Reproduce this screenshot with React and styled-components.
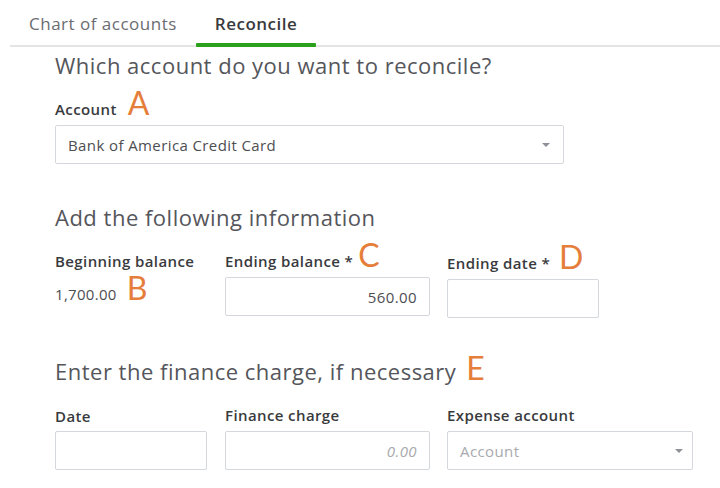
import React from 'react';
import styled, { createGlobalStyle } from 'styled-components';

const GlobalStyle = createGlobalStyle`
  html, body {
    margin: 0;
    padding: 0;
    background: #fff;
  }
  body {
    font-family: 'Open Sans', Lato, sans-serif;
    color: #393a3d;
  }
`;

const Page = styled.div`
  width: 720px;
  height: 488px;
  overflow: hidden;
  background: #fff;
`;

const TabBar = styled.div`
  display: flex;
  margin-left: 10px;
  height: 47px;
  border-bottom: 2px solid #e4e4e4;
  box-sizing: border-box;
`;

const Tab = styled.div`
  position: relative;
  padding: 14px 19px 0;
  font-size: 17px;
  line-height: 20px;
  letter-spacing: 0.5px;
  font-weight: ${(p) => (p.active ? 600 : 400)};
  color: ${(p) => (p.active ? '#393a3d' : '#6b6c72')};
  &::after {
    content: '';
    display: ${(p) => (p.active ? 'block' : 'none')};
    position: absolute;
    left: 0;
    right: 0;
    bottom: -2px;
    height: 4px;
    background: #2ca01c;
    border-radius: 1px;
  }
`;

const Content = styled.div`
  padding: 3px 0 0 55px;
`;

const Heading = styled.h2`
  margin: ${(p) => p.top || 0}px 0 0;
  font-size: 22px;
  line-height: 30px;
  letter-spacing: 0.5px;
  font-weight: 400;
  color: #55565b;
`;

const Label = styled.div`
  font-size: 15px;
  line-height: 20px;
  letter-spacing: 0.4px;
  font-weight: 600;
  color: #393a3d;
  white-space: nowrap;
  margin-top: ${(p) => p.shift || 0}px;
`;

const Marker = styled.span`
  font-family: Lato, sans-serif;
  font-size: 32px;
  line-height: 0;
  font-weight: 400;
  letter-spacing: 0;
  color: #e67e3b;
  margin-left: ${(p) => (p.gap === undefined ? 9 : p.gap)}px;
`;

const Row = styled.div`
  display: flex;
  margin-top: ${(p) => p.top || 0}px;
`;

const Col = styled.div`
  width: ${(p) => p.w}px;
  flex: none;
`;

const Box = styled.div`
  box-sizing: border-box;
  width: ${(p) => p.w}px;
  height: 39px;
  border: 1px solid #d4d7dc;
  border-radius: 2px;
  background: #fff;
  display: flex;
  align-items: center;
  justify-content: ${(p) => (p.right ? 'flex-end' : 'space-between')};
  padding: 0 12px;
  font-size: 15px;
  letter-spacing: 0.4px;
  color: ${(p) => (p.placeholder ? '#a9aaae' : '#4d4e52')};
  font-style: ${(p) => (p.italic ? 'italic' : 'normal')};
  margin-top: 6px;
`;

const Caret = styled.span`
  width: 0;
  height: 0;
  border-left: 4px solid transparent;
  border-right: 4px solid transparent;
  border-top: 4px solid #8d9096;
  margin-right: ${(p) => p.right || 0}px;
`;

const Value = styled.div`
  margin-top: 13px;
  font-size: 15px;
  line-height: 20px;
  letter-spacing: 0.3px;
  color: #4d4e52;
`;

export default function App() {
  return (
    <Page>
      <GlobalStyle />
      <TabBar>
        <Tab>Chart of accounts</Tab>
        <Tab active>Reconcile</Tab>
      </TabBar>
      <Content>
        <Heading>Which account do you want to reconcile?</Heading>
        <Row top={19}>
          <Col w={520}>
            <Label>
              Account<Marker gap={11}>A</Marker>
            </Label>
            <Box w={509}>
              Bank of America Credit Card
              <Caret right={1} />
            </Box>
          </Col>
        </Row>

        <Heading top={38}>Add the following information</Heading>
        <Row top={19}>
          <Col w={170}>
            <Label>Beginning balance</Label>
            <Value>
              1,700.00<Marker gap={10}>B</Marker>
            </Value>
          </Col>
          <Col w={222}>
            <Label>
              Ending balance *<Marker gap={5}>C</Marker>
            </Label>
            <Box w={205} right>
              560.00
            </Box>
          </Col>
          <Col w={160}>
            <Label shift={2}>
              Ending date *<Marker gap={9}>D</Marker>
            </Label>
            <Box w={152} />
          </Col>
        </Row>

        <Heading top={38}>
          Enter the finance charge, if necessary<Marker gap={10}>E</Marker>
        </Heading>
        <Row top={19}>
          <Col w={170}>
            <Label shift={1}>Date</Label>
            <Box w={152} style={{ marginTop: 5 }} />
          </Col>
          <Col w={222}>
            <Label>Finance charge</Label>
            <Box w={205} right italic placeholder>
              0.00
            </Box>
          </Col>
          <Col w={250}>
            <Label>Expense account</Label>
            <Box w={246} placeholder>
              Account
              <Caret right={-3} />
            </Box>
          </Col>
        </Row>
      </Content>
    </Page>
  );
}
